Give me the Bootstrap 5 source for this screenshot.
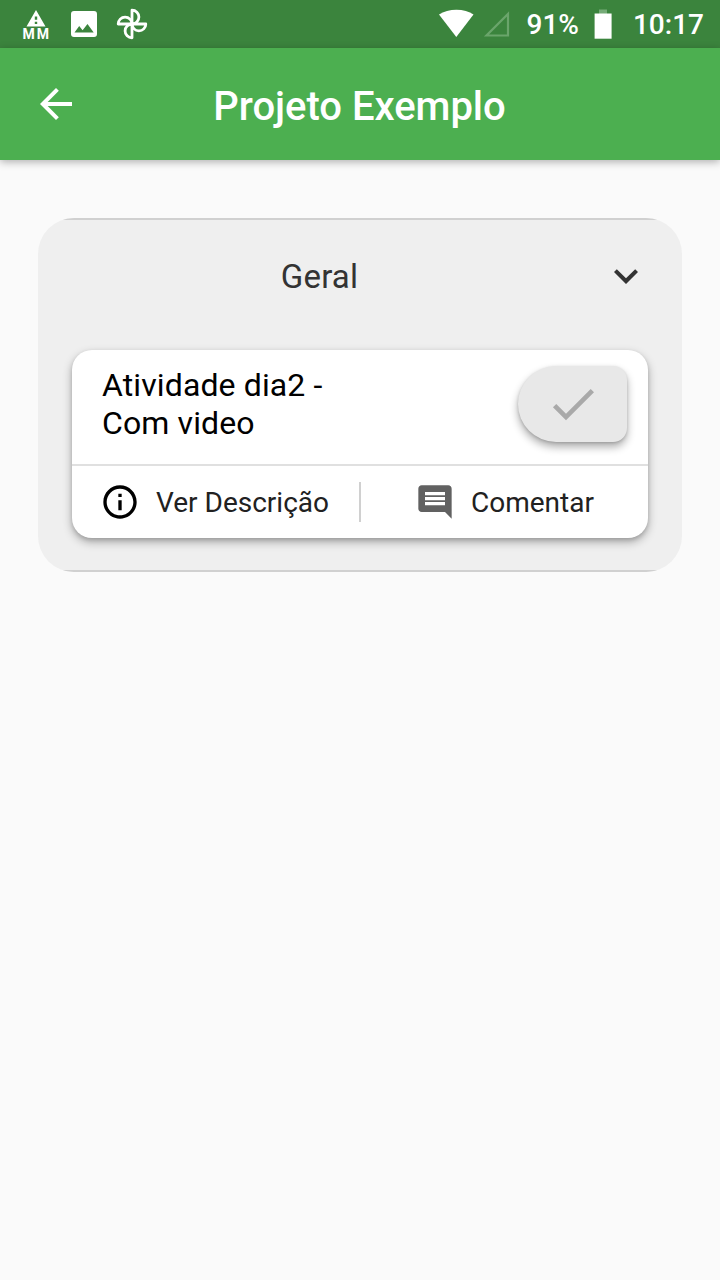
<!DOCTYPE html>
<html lang="pt-BR">
<head>
<meta charset="utf-8">
<meta name="viewport" content="width=device-width, initial-scale=1">
<title>Projeto Exemplo</title>
<link href="https://cdn.jsdelivr.net/npm/bootstrap@5.3.0/dist/css/bootstrap.min.css" rel="stylesheet">
<style>
body{font-family:Roboto,"Liberation Sans",sans-serif;background:#fafafa;min-height:1280px;overflow:hidden}
svg{display:block;flex:none}
.status-bar{height:48px;background:#3b843d;font-size:28px;line-height:48px;font-weight:500}
.signals{padding-right:16px}
.signals span{padding-top:2px}
.app-bar{height:112px;background:#4caf50;box-shadow:0 2px 8px rgba(0,0,0,.3);padding:0 32px}
.app-title{font-size:40px;font-weight:500;line-height:48px;padding:5px 1px 0 0;letter-spacing:-.03px;margin:0}
.section-panel{margin:58px 38px 0;border-radius:36px;background:#efefef;overflow:hidden}
.section-lines{border-top:2px solid #d0d0d0;border-bottom:2px solid #d0d0d0;height:354px;padding:0 34px}
.section-head{height:130px;color:#333}
.section-name{font-size:33px;line-height:40px;padding:0 35px 17px 0;letter-spacing:.2px}
.section-toggle{background:none;border:0;padding:0 0 18px;margin-right:-2px}
.task-card{height:188px;border:0;border-radius:20px;box-shadow:0 4px 10px rgba(0,0,0,.3),0 2px 4px rgba(0,0,0,.12);background:#fff}
.task-top{height:114px;padding:16px 21px 0 30px;color:#000}
.task-name{font-size:32px;line-height:38px;width:250px;letter-spacing:.12px}
.done-btn{width:109px;height:76px;border:0;border-radius:38px 14px 14px 38px;background:#e8e8e8;box-shadow:0 5px 8px rgba(0,0,0,.32),0 1px 3px rgba(0,0,0,.15)}
.task-actions{height:74px;border-top:2px solid #e0e0e0;font-size:28px;color:#212121}
.action{line-height:40px}
.action span{padding-top:1px}
.action-desc{width:287px;padding-left:28px}
.action-comment{padding-left:54px}
.action-sep{width:2px;height:40px;background:#d0d0d0}
</style>
</head>
<body>
<header>
  <div class="status-bar d-flex justify-content-between text-white">
    <div class="d-flex">
      <svg width="160" height="48" viewBox="0 0 160 48" fill="#fff">
        <path fill-rule="evenodd" d="M36 10l9.500 16.500h-19zM34.800 16.500v3.300h2.400v-3.300zM34.800 21.700v2.300h2.400v-2.300z"/>
        <text x="22.500" y="39" font-family="Roboto" font-size="14" font-weight="700" textLength="26.500" lengthAdjust="spacing">MM</text>
        <path fill-rule="evenodd" d="M74 11h20a3 3 0 0 1 3 3v20a3 3 0 0 1-3 3H74a3 3 0 0 1-3-3V14a3 3 0 0 1 3-3zM74.500 32.500h19.200l-6.200-8.500-4.900 6.300-3.400-4.200z"/>
        <g fill="none" stroke="#fff" stroke-width="2.800" stroke-linejoin="round">
          <path d="M132 24V10.200a6.900 6.900 0 0 1 0 13.800"/>
          <path d="M132 24h13.800a6.900 6.900 0 0 1-13.800 0"/>
          <path d="M132 24v13.800a6.900 6.900 0 0 1 0-13.800"/>
          <path d="M132 24h-13.800a6.900 6.900 0 0 1 13.800 0"/>
        </g>
      </svg>
    </div>
    <div class="signals d-flex align-items-center">
      <svg width="83" height="48" viewBox="436 0 83 48">
        <path d="M439 14.500C448 8 465 8 473.500 14.500L456.300 37z" fill="#fff"/>
        <path d="M486.500 35.500H508V14z" fill="none" stroke="#6aa56b" stroke-width="2.200"/>
      </svg>
      <span class="battery-text ms-2">91%</span>
      <svg width="18" height="48" viewBox="594 0 18 48" style="margin-left:15px"><path d="M599 9.500h8v4.500h-8z" fill="#75ab77"/><path d="M594.600 13.500h17v25.200h-17z" fill="#fff"/></svg>
      <span class="clock-text" style="margin-left:21px">10:17</span>
    </div>
  </div>
  <nav class="app-bar d-flex align-items-center text-white">
    <svg width="48" height="48" viewBox="0 0 24 24" fill="#fff"><path d="M20 11H7.830l5.590-5.590L12 4l-8 8 8 8 1.410-1.410L7.830 13H20v-2z"/></svg>
    <h1 class="app-title flex-grow-1 text-center">Projeto Exemplo</h1>
    <span class="p-4"></span>
  </nav>
</header>
<main>
  <section class="section-panel">
    <div class="section-lines">
      <div class="section-head d-flex align-items-center">
        <div class="section-name flex-grow-1 text-center">Geral</div>
        <button class="section-toggle" aria-label="Expandir"><svg width="48" height="48" viewBox="0 0 24 24" fill="#333"><path d="M16.590 8.590L12 13.170 7.410 8.590 6 10l6 6 6-6z"/></svg></button>
      </div>
      <article class="task-card card">
        <div class="task-top d-flex justify-content-between">
          <div class="task-name">Atividade dia2 -<br>Com video</div>
          <button class="done-btn d-flex align-items-center justify-content-center p-0" aria-label="Concluir"><svg width="56" height="56" viewBox="0 0 24 24" fill="#a9a9a9"><path d="M9 16.170L4.830 12l-1.420 1.410L9 19 21 7l-1.410-1.410z"/></svg></button>
        </div>
        <div class="task-actions d-flex align-items-center">
          <div class="action action-desc d-flex align-items-center">
            <svg width="40" height="40" viewBox="0 0 24 24" fill="#000"><path d="M11 7h2v2h-2zm0 4h2v6h-2zm1-9C6.480 2 2 6.480 2 12s4.480 10 10 10 10-4.480 10-10S17.520 2 12 2zm0 18c-4.410 0-8-3.590-8-8s3.590-8 8-8 8 3.590 8 8-3.590 8-8 8z"/></svg>
            <span class="ms-3">Ver Descrição</span>
          </div>
          <div class="action-sep"></div>
          <div class="action action-comment d-flex align-items-center">
            <svg width="40" height="40" viewBox="0 0 24 24" fill="#616161"><path d="M21.990 4c0-1.100-.89-2-1.990-2H4c-1.100 0-2 .9-2 2v12c0 1.100.9 2 2 2h14l4 4-.01-18zM18 14H6v-2h12v2zm0-3H6V9h12v2zm0-3H6V6h12v2z"/></svg>
            <span class="ms-3">Comentar</span>
          </div>
        </div>
      </article>
    </div>
  </section>
</main>
<script src="https://cdn.jsdelivr.net/npm/bootstrap@5.3.0/dist/js/bootstrap.bundle.min.js"></script>
</body>
</html>
